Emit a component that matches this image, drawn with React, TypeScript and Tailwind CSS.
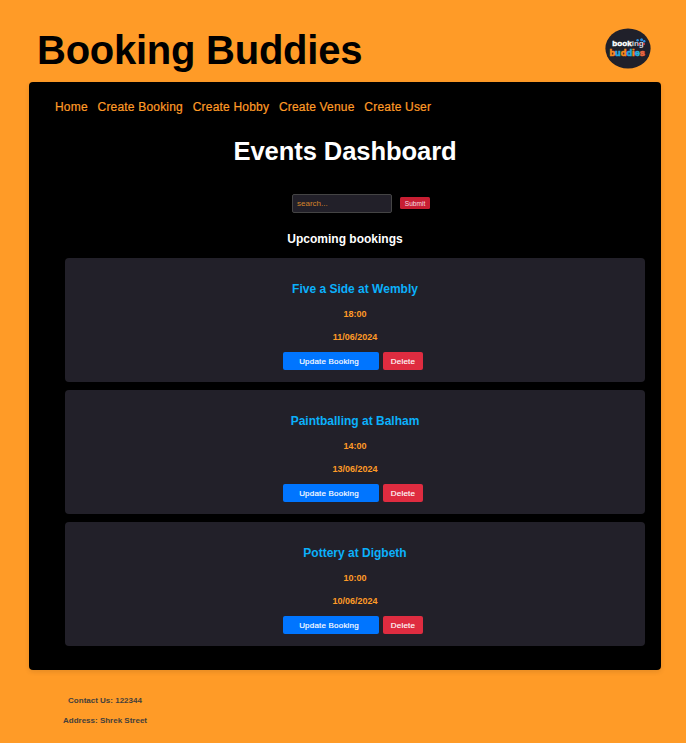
const navItems = ['Home', 'Create Booking', 'Create Hobby', 'Create Venue', 'Create User'];

const bookings = [
  { title: 'Five a Side at Wembly', time: '18:00', date: '11/06/2024' },
  { title: 'Paintballing at Balham', time: '14:00', date: '13/06/2024' },
  { title: 'Pottery at Digbeth', time: '10:00', date: '10/06/2024' },
];

function Logo() {
  return (
    <svg width="46" height="42" viewBox="0 0 46 42" className="mt-[27px]" fontFamily="'Liberation Sans', Arial, sans-serif">
      <ellipse cx="23" cy="21.5" rx="22.6" ry="20.1" fill="#20202a" />
      <text x="7.3" y="19" fontSize="7.6" fontWeight="700" fill="#ffffff" stroke="#ffffff" strokeWidth="0.4" textLength="31.5" lengthAdjust="spacingAndGlyphs">
        book<tspan fill="#c9ced8" stroke="none">in</tspan><tspan fill="#d5dbe4" stroke="none">g</tspan>
      </text>
      <circle cx="32.6" cy="13.2" r="1.2" fill="#2b8fe6" />
      <circle cx="36.6" cy="12.7" r="1.5" fill="#2b8fe6" />
      <circle cx="39.2" cy="14.2" r="1.2" fill="#2b8fe6" />
      <circle cx="33.9" cy="17.2" r="1" fill="#e34352" />
      <circle cx="39" cy="17" r="1" fill="#e34352" />
      <text x="4.4" y="29.3" fontSize="8.8" fontWeight="700" strokeWidth="0.6" textLength="35.6" lengthAdjust="spacingAndGlyphs">
        <tspan fill="#f98b1c" stroke="#f98b1c">b</tspan><tspan fill="#26a9e0" stroke="#26a9e0">u</tspan><tspan fill="#f98b1c" stroke="#f98b1c">d</tspan><tspan fill="#26a9e0" stroke="#26a9e0">d</tspan><tspan fill="#f98b1c" stroke="#f98b1c">i</tspan><tspan fill="#2eb0dd" stroke="#2eb0dd">e</tspan><tspan fill="#ed6741" stroke="#ed6741">s</tspan>
      </text>
    </svg>
  );
}

function BookingCard({ title, time, date }: { title: string; time: string; date: string }) {
  return (
    <article className="flex h-[124px] flex-col items-center rounded bg-[#222029] pt-6 font-bold">
      <h3 className="text-[12px] leading-[14px] text-[#0bb0fb]">{title}</h3>
      <p className="mt-[13px] text-[9px] leading-[10px] text-[#ff9b27]">{time}</p>
      <p className="mt-[13px] text-[9px] leading-[10px] text-[#ff9b27]">{date}</p>
      <div className="mt-[10px] flex gap-1 pr-1 text-[8px] font-normal tracking-[0.2px] text-white [-webkit-text-stroke:0.15px_#ffffff]">
        <button className="h-[18px] w-24 rounded-[2px] bg-[#0075ff] pt-px pr-1">Update Booking</button>
        <button className="h-[18px] w-10 rounded-[2px] bg-[#df2c40] pt-px">Delete</button>
      </div>
    </article>
  );
}

export default function App() {
  return (
    <div className="h-[743px] w-[686px] overflow-hidden bg-[#ff9b27] font-['Liberation_Sans',Arial,sans-serif]">
      <header className="flex h-[82px] justify-between pr-[35px] pl-[37px]">
        <h1 className="mt-[27px] text-[40px] leading-[46px] font-bold tracking-[-0.25px] text-black">Booking Buddies</h1>
        <Logo />
      </header>
      <main className="mr-[25px] ml-[29px] flex h-[588px] flex-col rounded bg-black pt-[18px] shadow-[0_2px_5px_rgba(0,0,0,0.1)]">
        <nav className="flex gap-[9.8px] pl-[26px] text-[12px] leading-[14px] tracking-[0.19px] text-[#ff9b27] [-webkit-text-stroke:0.2px_#ff9b27]">
          {navItems.map((item) => (
            <a key={item} href="#" className="whitespace-nowrap">{item}</a>
          ))}
        </nav>
        <h2 className="mt-[22px] text-center text-[25.6px] leading-[30px] font-bold tracking-[-0.1px] text-white">Events Dashboard</h2>
        <form className="mt-[28px] ml-[263px] flex h-[19px] items-start gap-2">
          <input
            placeholder="search..."
            className="h-[19px] w-[100px] rounded-[2px] border border-[#444444] bg-[#222029] px-1 text-[8px] placeholder:text-[#d38429]"
          />
          <button type="button" className="mt-[3px] h-3 w-[30px] rounded-[1.5px] bg-[#c81e32] pt-px text-[6.6px] leading-[11px] text-[#f4dce0]">
            Submit
          </button>
        </form>
        <h3 className="mt-[19px] text-center text-[12px] leading-[14px] font-bold text-white">Upcoming bookings</h3>
        <section className="mt-[12px] mr-4 ml-9 flex flex-col gap-2">
          {bookings.map((booking) => (
            <BookingCard key={booking.title} {...booking} />
          ))}
        </section>
      </main>
      <footer className="ml-[29px] flex w-[152px] flex-col items-center gap-[10px] pt-[26px] text-[8px] leading-[10px] font-bold text-[#44403c]">
        <p>Contact Us: 122344</p>
        <p>Address: Shrek Street</p>
      </footer>
    </div>
  );
}
